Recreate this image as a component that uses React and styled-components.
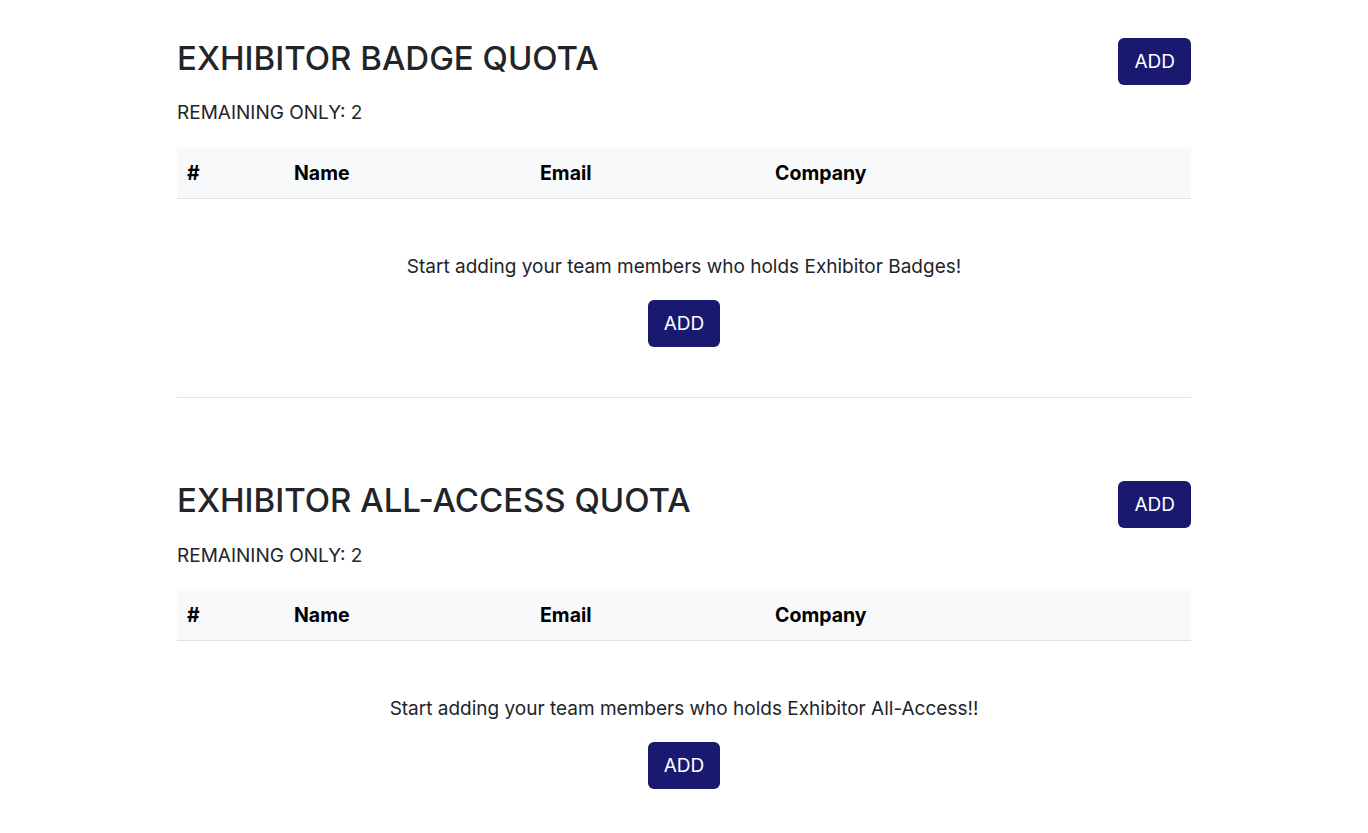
import React from "react";
import styled, { createGlobalStyle } from "styled-components";

const GlobalStyle = createGlobalStyle`
  body {
    margin: 0;
    background: #ffffff;
    font-family: Inter, "Noto Sans", "Liberation Sans", sans-serif;
    color: #212529;
  }
`;

const quotas = [
  {
    title: "EXHIBITOR BADGE QUOTA",
    remaining: 2,
    empty: "Start adding your team members who holds Exhibitor Badges!",
  },
  {
    title: "EXHIBITOR ALL-ACCESS QUOTA",
    remaining: 2,
    empty: "Start adding your team members who holds Exhibitor All-Access!!",
  },
];

const columns = [
  { label: "#", width: "107px" },
  { label: "Name", width: "246px" },
  { label: "Email", width: "235px" },
  { label: "Company", width: "auto" },
];

function QuotaSection({ title, remaining, empty }) {
  return (
    <Section>
      <Header>
        <Title>{title}</Title>
        <AddBtn>ADD</AddBtn>
      </Header>
      <Remaining>REMAINING ONLY: {remaining}</Remaining>
      <Table>
        <thead>
          <tr>
            {columns.map((c) => (
              <Th key={c.label} $w={c.width}>
                {c.label}
              </Th>
            ))}
          </tr>
        </thead>
        <tbody>
          <tr>
            <EmptyCell colSpan={4}>
              <EmptyText>{empty}</EmptyText>
              <AddBtn>ADD</AddBtn>
            </EmptyCell>
          </tr>
        </tbody>
      </Table>
    </Section>
  );
}

export default function App() {
  return (
    <>
      <GlobalStyle />
      <Page>
        {quotas.map((q) => (
          <QuotaSection key={q.title} {...q} />
        ))}
      </Page>
    </>
  );
}

const Page = styled.div`
  width: 1014px;
  margin: 0 auto;
`;

const Section = styled.section`
  padding-top: 38px;
  padding-bottom: 45px;
`;

const Header = styled.div`
  display: flex;
  justify-content: space-between;
  align-items: center;
`;

const Title = styled.h2`
  margin: -6px 0 0;
  font-size: 33px;
  font-weight: 500;
  line-height: 1.2;
  color: #212529;
`;

const AddBtn = styled.button`
  border: none;
  background-color: #191970;
  color: #ffffff;
  font-family: inherit;
  font-size: 19px;
  height: 47px;
  padding: 0 16px;
  border-radius: 6px;
  cursor: pointer;
`;

const Remaining = styled.p`
  margin: 14px 0 22px;
  font-size: 19px;
  line-height: 27px;
`;

const Table = styled.table`
  width: 100%;
  border-collapse: collapse;
  table-layout: fixed;
`;

const Th = styled.th`
  box-sizing: border-box;
  width: ${(p) => p.$w};
  text-align: left;
  background-color: #f8f9fa;
  color: #000000;
  font-size: 19.5px;
  font-weight: 700;
  height: 50px;
  padding: 0 10px;
  border-bottom: 1px solid #dee2e6;
`;

const EmptyCell = styled.td`
  text-align: center;
  padding: 54px 0 50px;
  border-bottom: 1px solid #dee2e6;
`;

const EmptyText = styled.p`
  margin: 0 0 20px;
  font-size: 19px;
  line-height: 27px;
`;
